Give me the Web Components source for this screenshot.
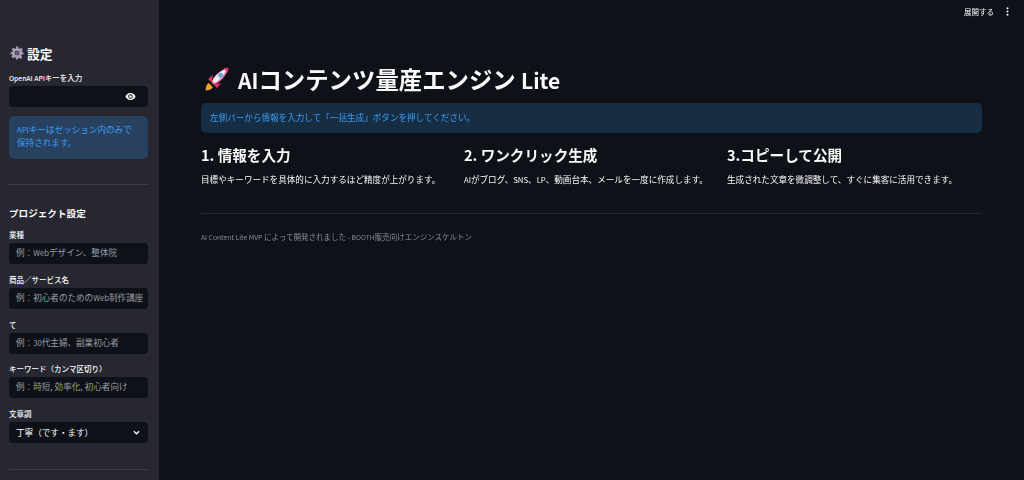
<!DOCTYPE html>
<html lang="ja">
<head>
<meta charset="utf-8">
<title>AIコンテンツ量産エンジン Lite</title>
<style>
    html, body {margin: 0; height: 100%; background: #0e1117;}
    body {
        font-family: "Noto Sans CJK JP", "Noto Sans", sans-serif;
        color: #fafafa;
        overflow: hidden;
    }
    /* latin runs sit a bit smaller than the CJK font draws them */
    small {font-size: .9em;}
</style>
</head>
<body>
<app-shell>
    <side-bar slot="side">
        <side-heading>設定</side-heading>
        <text-field label="<small>OpenAI API</small>キーを入力" kind="password"></text-field>
        <info-box tone="side"><small>API</small>キーはセッション内のみで<br>保持されます。</info-box>
        <h-rule top="25" bottom="22.25"></h-rule>
        <sub-heading>プロジェクト設定</sub-heading>
        <text-field label="業種" placeholder="例：<small>Web</small>デザイン、整体院"></text-field>
        <text-field label="商品／サービス名" placeholder="例：初心者のための<small>Web</small>制作講座"></text-field>
        <text-field label="て" placeholder="例：<small>30</small>代主婦、副業初心者"></text-field>
        <text-field label="キーワード（カンマ区切り）" placeholder="例：時短, 効率化, 初心者向け"></text-field>
        <text-field label="文章調" value="丁寧（です・ます）" kind="select"></text-field>
        <h-rule top="26" bottom="26"></h-rule>
    </side-bar>
    <top-bar slot="top"></top-bar>
    <main-pane slot="main">
        <page-title><small>AI</small>コンテンツ量産エンジン <small>Lite</small></page-title>
        <info-box tone="main">左側バーから情報を入力して「一括生成」ボタンを押してください。</info-box>
        <step-row>
            <step-col heading="1. 情報を入力">目標やキーワードを具体的に入力するほど精度が上がります。</step-col>
            <step-col heading="2. ワンクリック生成"><small>AI</small>がブログ、<small>SNS</small>、<small>LP</small>、動画台本、メールを一度に作成します。</step-col>
            <step-col heading="3.コピーして公開">生成された文章を微調整して、すぐに集客に活用できます。</step-col>
        </step-row>
        <h-rule top="27" bottom="17" dim></h-rule>
        <foot-note><small>AI Content Lite MVP</small> によって開発されました <small>- BOOTH</small>販売向けエンジンスケルトン</foot-note>
    </main-pane>
</app-shell>

<script>
(function () {
    function define(name, html) {
        customElements.define(name, class extends HTMLElement {
            connectedCallback() {
                if (this.shadowRoot) return;
                let root = this.attachShadow({mode: 'open'});
                root.innerHTML = typeof html === 'function' ? html(this) : html;
            }
        });
    }

    define('app-shell', `
        <style>
            :host {display: grid; grid-template-columns: 159px 1fr; grid-template-rows: 22px 1fr; height: 480px; overflow: hidden; filter: blur(.4px);}
            .side {grid-row: 1 / 3;}
        </style>
        <div class="side"><slot name="side"></slot></div>
        <slot name="top"></slot>
        <slot name="main"></slot>
    `);

    define('side-bar', `
        <style>
            :host {display: block; box-sizing: border-box; height: 480px; overflow: hidden;
                   padding: 45px 11px 0 9px; background: #262730;}
        </style>
        <slot></slot>
    `);

    define('side-heading', `
        <style>
            :host {display: flex; align-items: center; gap: 3px; height: 16px; margin-bottom: 1.25px; padding-left: 1px;
                   font-size: 12.8px; font-weight: 700; color: #fafafa;}
        </style>
        <svg width="14" height="14" viewBox="0 0 24 24">
            <path fill="#a99bb5" fill-rule="evenodd" d="M10 1h4l.7 3.1 1.9.8 2.7-1.7 2.8 2.8-1.7 2.7.8 1.9L23.300 11v3l-3.100.7-.8 1.900 1.700 2.700-2.800 2.800-2.700-1.700-1.900.8L13.600 23h-3.200l-.7-2.900-1.900-.8-2.700 1.700-2.800-2.800 1.700-2.700-.8-1.900L.7 14v-3l3.100-.7.8-1.900-1.700-2.700 2.800-2.800 2.700 1.700 1.900-.8zM12 8a4 4 0 1 0 0 8 4 4 0 0 0 0-8z"/>
            <circle cx="12" cy="12" r="3" fill="#6d6478"/>
        </svg>
        <span><slot></slot></span>
    `);

    define('sub-heading', `
        <style>
            :host {display: block; height: 12px; line-height: 12px; font-size: 9.6px; font-weight: 700; color: #fafafa; white-space: nowrap;}
        </style>
        <slot></slot>
    `);

    define('text-field', host => {
        let kind = host.getAttribute('kind') || 'text';
        let label = host.getAttribute('label');
        let placeholder = host.getAttribute('placeholder');
        let value = host.getAttribute('value');
        let eye = `<svg class="end" width="11" height="11" viewBox="0 0 24 24"><path fill="#fafafa" d="M12 4.500C7 4.500 2.700 7.600 1 12c1.700 4.400 6 7.500 11 7.500s9.300-3.100 11-7.500c-1.700-4.400-6-7.500-11-7.500zM12 17a5 5 0 1 1 0-10 5 5 0 0 1 0 10zm0-8a3 3 0 1 0 0 6 3 3 0 0 0 0-6z"/></svg>`;
        let chevron = `<svg class="end" width="9" height="9" viewBox="0 0 24 24"><path fill="none" stroke="#fafafa" stroke-width="3.500" d="M5 8.500l7 7 7-7"/></svg>`;
        return `
            <style>
                :host {display: block; padding-top: 10.75px;}
                small {font-size: .9em;}
                .label {display: block; height: 10px; line-height: 10px; margin-bottom: 3px; font-size: 7.5px; font-weight: 500; color: #fafafa; white-space: nowrap;}
                .box {display: flex; align-items: center; box-sizing: border-box; height: 21px; padding: 0 0 0 7px;
                      background: #0e1117; border-radius: 4px; font-size: 8.58px; overflow: hidden; white-space: nowrap;}
                .ph {flex: 1; color: #9a9da4; margin-bottom: 3px;}
                .val {flex: 1; color: #fafafa; margin-bottom: 2px;}
                .end {flex: none;}
                .pw {padding-right: 12px;}
                .sel {padding-right: 7px;}
            </style>
            <span class="label">${label}</span>
            <div class="box ${kind === 'password' ? 'pw' : kind === 'select' ? 'sel' : ''}">
                ${placeholder ? `<span class="ph">${placeholder}</span>` : ''}
                ${value ? `<span class="val">${value}</span>` : ''}
                ${kind === 'password' ? '<span class="val"></span>' + eye : ''}
                ${kind === 'select' ? chevron : ''}
            </div>
        `;
    });

    define('info-box', host => {
        let side = host.getAttribute('tone') === 'side';
        return `
            <style>
                :host {display: block; box-sizing: border-box; border-radius: 5px; font-size: 8.58px;
                       color: #3d9df3; background: ${side ? '#27415f' : '#172d43'};
                       ${side ? 'height: 43px; padding: 7px 8px; line-height: 13px; margin-top: 9px;'
                              : 'height: 30px; padding: 0 9px; line-height: 28px;'}}
            </style>
            <slot></slot>
        `;
    });

    define('h-rule', host => `
        <style>
            :host {display: block; height: 1px; margin: ${host.getAttribute('top')}px 0 ${host.getAttribute('bottom')}px;
                   background: ${host.hasAttribute('dim') ? '#262730' : '#3d3f4a'};}
        </style>
    `);

    define('top-bar', `
        <style>
            :host {display: flex; align-items: center; justify-content: flex-end; gap: 12px; height: 22px; padding-right: 15px;
                   font-size: 7.5px; color: #fafafa;}
            span {white-space: nowrap;}
        </style>
        <span>展開する</span>
        <svg width="3" height="9" viewBox="0 0 3 9" fill="#fafafa"><circle cx="1.5" cy="1.2" r="1"/><circle cx="1.5" cy="4.5" r="1"/><circle cx="1.5" cy="7.8" r="1"/></svg>
    `);

    define('main-pane', `
        <style>
            :host {display: block; padding: 43px 42px 0 42px;}
        </style>
        <slot></slot>
    `);

    define('page-title', `
        <style>
            :host {display: flex; align-items: center; gap: 8px; height: 28px; margin-bottom: 10px; padding-left: 3px;
                   font-size: 23.4px; font-weight: 700; color: #fafafa; white-space: nowrap;}
            span {line-height: 28px;}
            ::slotted(small) {font-size: .96em;}
        </style>
        <svg width="26" height="26" viewBox="0 0 32 32">
            <path fill="#f4a12b" d="M2 30c0-4 1-7 4-9l5 5c-2 3-5 4-9 4z"/>
            <path fill="#e8336e" d="M5 16l6-5-2 9zM16 27l5-6-9 2z"/>
            <path fill="#f06d97" d="M9 20C12 12 20 4 30 2c-2 10-10 18-18 21z"/>
            <path fill="#f3eef0" d="M10.500 18C14 12 20 6 27 4c0 5-7 13-13.500 17z"/>
            <path fill="#e8336e" d="M24 2.700 30 2l-.7 6z"/>
            <circle cx="20.500" cy="11.500" r="3.200" fill="#7da8dd"/>
        </svg>
        <span><slot></slot></span>
    `);

    define('step-row', `
        <style>
            :host {display: grid; grid-template-columns: repeat(3, 1fr); column-gap: 8px; margin-top: 12px;}
        </style>
        <slot></slot>
    `);

    define('step-col', host => `
        <style>
            :host {display: block; white-space: nowrap;}
            h3 {margin: 0 0 7px; height: 20px; line-height: 20px; font-size: 14.6px; font-weight: 700; color: #fafafa;}
            p {margin: 0; height: 14px; line-height: 14px; font-size: 8.58px; color: #fafafa;}
        </style>
        <h3>${host.getAttribute('heading')}</h3>
        <p><slot></slot></p>
    `);

    define('foot-note', `
        <style>
            :host {display: block; height: 12px; line-height: 12px; font-size: 7.5px; color: #8b8e95; white-space: nowrap;}
        </style>
        <slot></slot>
    `);
})();
</script>
</body>
</html>
